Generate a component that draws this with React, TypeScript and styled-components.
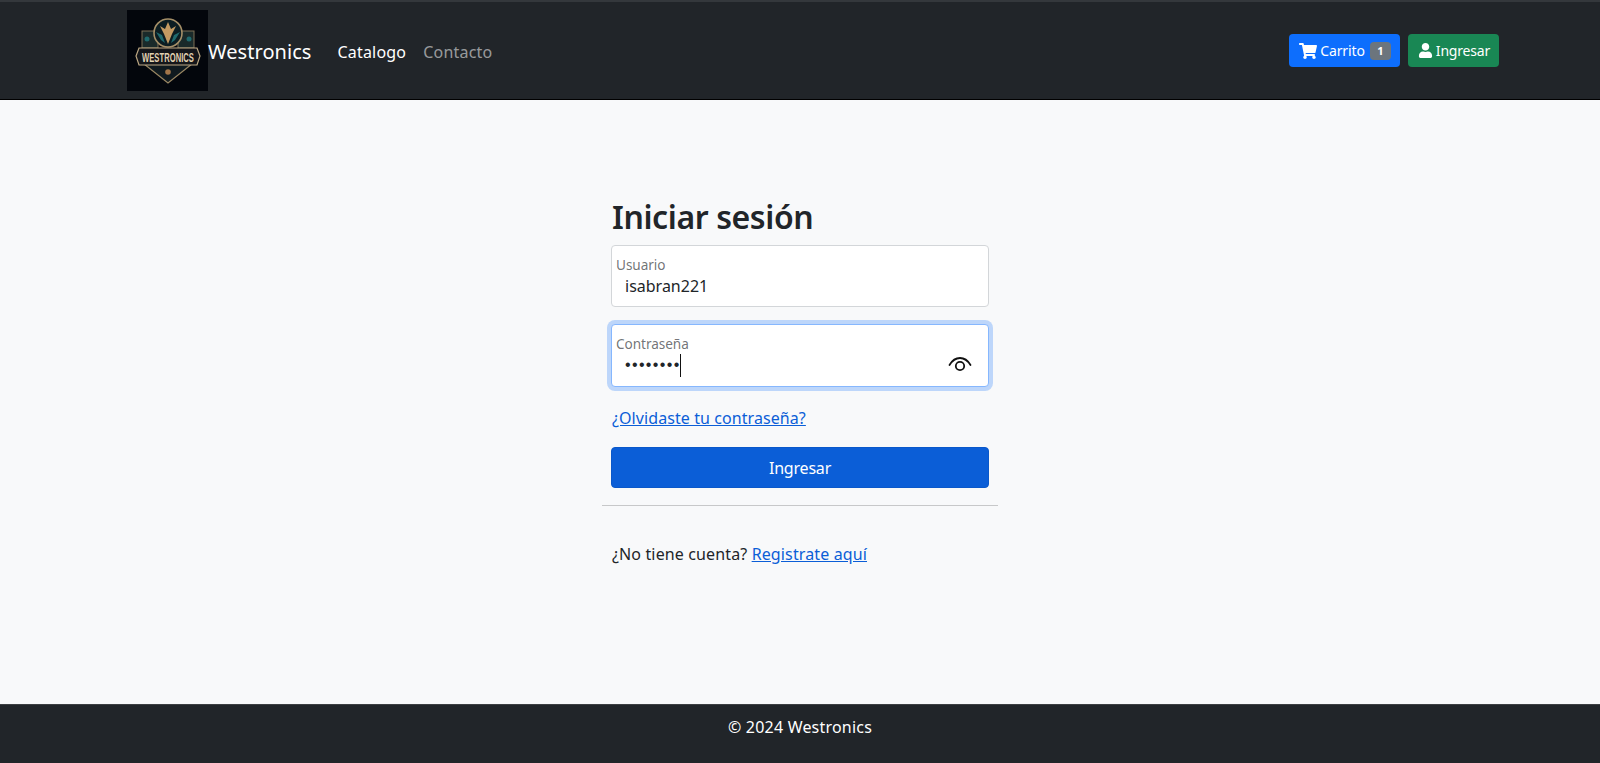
import styled, { createGlobalStyle } from 'styled-components'
import { FaShoppingCart, FaUser } from 'react-icons/fa'

const GlobalStyle = createGlobalStyle`
  * { box-sizing: border-box; }
  html, body { margin: 0; padding: 0; }
  body {
    font-family: "Noto Sans", "Open Sans", "Liberation Sans", sans-serif;
    font-size: 16px;
    color: #212529;
    background: #f8f9fa;
  }
`

const Page = styled.div`
  min-height: 763px;
  display: flex;
  flex-direction: column;
`

const Navbar = styled.nav`
  height: 100px;
  flex: none;
  display: flex;
  align-items: center;
  padding: 0 101px 0 127px;
  background: #212529;
  border-top: 2px solid #34383c;
  border-bottom: 1px solid #000;
`

const Brand = styled.a`
  display: flex;
  align-items: center;
  color: #fff;
  font-size: 20px;
  letter-spacing: 0.05px;
  margin-right: 26px;
`

const BrandName = styled.span`
  margin-top: 2px;
`

const NavLink = styled.a<{ $active?: boolean }>`
  margin-top: 2px;
  color: ${p => (p.$active ? '#fff' : 'rgba(255,255,255,0.55)')};
  font-size: 16px;
  letter-spacing: 0.2px;
  margin-right: 17px;
`

const NavRight = styled.div`
  margin-left: auto;
  display: flex;
  gap: 8px;
`

const NavButton = styled.a<{ $bg: string }>`
  height: 33px;
  display: flex;
  align-items: center;
  padding: 0 9px 0 10px;
  gap: 3px;
  border-radius: 4px;
  background: ${p => p.$bg};
  color: #fff;
  font-size: 14px;
  letter-spacing: -0.2px;
`

const CartLabel = styled.span`
  letter-spacing: -0.1px;
`

const Badge = styled.span`
  width: 21px;
  height: 18px;
  margin-left: 2px;
  display: flex;
  align-items: center;
  justify-content: center;
  border-radius: 4px;
  background: #6c757d;
  font-size: 11px;
  font-weight: 700;
`

const Main = styled.main`
  flex: 1;
  display: flex;
  justify-content: center;
  padding-top: 96px;
`

const FormBox = styled.div`
  width: 396px;
`

const Inner = styled.div`
  padding: 0 9px;
`

const Title = styled.h1`
  margin: 0 0 7px;
  padding-left: 1px;
  font-size: 32px;
  line-height: 42px;
  font-weight: 600;
  letter-spacing: -0.4px;
`

const Field = styled.div<{ $focused?: boolean }>`
  height: ${p => (p.$focused ? 63 : 62)}px;
  margin-bottom: 17px;
  padding: 10px 4px 0;
  display: flex;
  flex-direction: column;
  position: relative;
  background: #fff;
  border-radius: 4px;
  border: 1px solid ${p => (p.$focused ? '#86b7fe' : '#d3d6d9')};
  box-shadow: ${p => (p.$focused ? '0 0 0 4px rgba(13,110,253,0.25)' : 'none')};
`

const FieldLabel = styled.label`
  font-size: 13.6px;
  line-height: 18px;
  letter-spacing: -0.05px;
  color: rgba(33,37,41,0.65);
`

const FieldValue = styled.div`
  display: flex;
  align-items: center;
  height: 24px;
  padding-left: 9px;
  font-size: 16px;
`

const Dots = styled.span`
  font-size: 16px;
  letter-spacing: 1.35px;
  font-family: "Liberation Sans", sans-serif;
`

const Caret = styled.span`
  width: 1.5px;
  height: 23px;
  margin-left: -1px;
  background: #111;
`

const EyeButton = styled.span`
  position: absolute;
  right: 16px;
  top: 31px;
  line-height: 0;
`

const Forgot = styled.a`
  display: block;
  margin-top: 19px;
  padding-left: 1px;
  font-size: 16px;
  line-height: 24px;
  letter-spacing: 0.08px;
  color: #0b5ed7;
  text-decoration: underline;
`

const Submit = styled.button`
  display: block;
  width: 100%;
  height: 41px;
  margin-top: 17px;
  border: 1px solid #0a58ca;
  border-radius: 4px;
  background: #0b5ed7;
  color: #fff;
  font-family: inherit;
  font-size: 16px;
  letter-spacing: -0.2px;
`

const Rule = styled.hr`
  margin: 17px 0 36px;
  border: 0;
  border-top: 1px solid #c7c8c9;
`

const RegisterLine = styled.p`
  margin: 0;
  padding-left: 1px;
  font-size: 16px;
  line-height: 24px;
  letter-spacing: 0.13px;
  a {
    color: #0b5ed7;
    text-decoration: underline;
  }
`

const Footer = styled.footer`
  height: 59px;
  flex: none;
  padding-top: 10px;
  background: #212529;
  border-top: 1px solid #3c3f42;
  color: #fff;
  text-align: center;
  font-size: 16px;
  line-height: 24px;
  letter-spacing: 0.2px;
`

function Logo() {
  return (
    <svg width="81" height="81" viewBox="0 0 81 81">
      <rect width="81" height="81" fill="#03060c" />
      <rect x="15" y="21" width="16" height="17" fill="#1a2a2a" stroke="#7d6f55" strokeWidth="1" />
      <rect x="51" y="21" width="16" height="17" fill="#1a2a2a" stroke="#7d6f55" strokeWidth="1" />
      <circle cx="20" cy="29" r="2.500" fill="#1f6a6e" />
      <circle cx="62" cy="29" r="2.500" fill="#1f6a6e" />
      <path d="M17 54h48L41 73z" fill="#101a1f" stroke="#9a8763" strokeWidth="1.3" />
      <circle cx="41" cy="23" r="14" fill="#0c1d22" stroke="#a58f68" strokeWidth="1.6" />
      <path d="M33 16l4 8 4 10 4-10 4-8-5 3-3-7-3 7z" fill="#c39a62" />
      <path d="M29 22l5 8 4 3-3-8zM53 22l-5 8-4 3 3-8z" fill="#1f6a6e" />
      <path d="M12 38h58l3 8-3 9H12l-3-9z" fill="#14161a" stroke="#bda883" strokeWidth="1.2" />
      <text transform="translate(41 51.5) scale(1 1.6)" textAnchor="middle" fontFamily="Liberation Sans, sans-serif" fontSize="7.6" fontWeight="700" fill="#e2d2b2">WESTRONICS</text>
      <circle cx="41" cy="62" r="2.800" fill="#a2764a" />
    </svg>
  )
}

function EyeIcon() {
  return (
    <svg width="24" height="16" viewBox="0 0 24 16" fill="none" stroke="#111" strokeWidth="1.8" strokeLinecap="round">
      <path d="M1.500 9C4.500 4 8.500 2 12 2s7.500 2 10.500 7" />
      <circle cx="12" cy="10" r="4.200" />
    </svg>
  )
}

export default function App() {
  return (
    <Page>
      <GlobalStyle />
      <Navbar>
        <Brand>
          <Logo />
          <BrandName>Westronics</BrandName>
        </Brand>
        <NavLink $active>Catalogo</NavLink>
        <NavLink>Contacto</NavLink>
        <NavRight>
          <NavButton $bg="#0d6efd">
            <FaShoppingCart size={18} />
            <CartLabel>Carrito</CartLabel>
            <Badge>1</Badge>
          </NavButton>
          <NavButton $bg="#198754">
            <FaUser size={15} />
            Ingresar
          </NavButton>
        </NavRight>
      </Navbar>
      <Main>
        <FormBox>
          <Inner>
            <Title>Iniciar sesión</Title>
            <Field>
              <FieldLabel>Usuario</FieldLabel>
              <FieldValue>isabran221</FieldValue>
            </Field>
            <Field $focused>
              <FieldLabel>Contraseña</FieldLabel>
              <FieldValue>
                <Dots>••••••••</Dots>
                <Caret />
              </FieldValue>
              <EyeButton>
                <EyeIcon />
              </EyeButton>
            </Field>
            <Forgot>¿Olvidaste tu contraseña?</Forgot>
            <Submit>Ingresar</Submit>
          </Inner>
          <Rule />
          <Inner>
            <RegisterLine>
              ¿No tiene cuenta? <a>Registrate aquí</a>
            </RegisterLine>
          </Inner>
        </FormBox>
      </Main>
      <Footer>© 2024 Westronics</Footer>
    </Page>
  )
}
